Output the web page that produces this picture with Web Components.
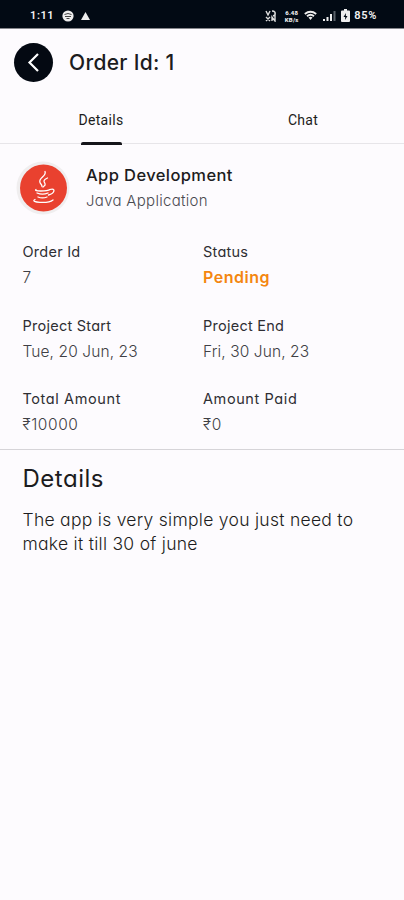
<!DOCTYPE html>
<html lang="en">
<head>
<meta charset="utf-8">
<meta name="viewport" content="width=device-width, initial-scale=1">
<title>Order Id: 1</title>
<style>
  body{
    margin: 0;
    background-color: #fdfbfe;
    font-family: Inter, "Liberation Sans", sans-serif;
    font-feature-settings: "cv11", "calt" 0;
    color: #1c1c20;
  }
</style>
</head>
<body>
<order-page></order-page>

<script>
// attach an open shadow root with the given markup
const render = (host, html) => {
  const template = document.createElement('template');
  template.innerHTML = html;
  host.attachShadow({mode: 'open'}).appendChild(
    template.content.cloneNode(true)
  );
};

class statusBar extends HTMLElement{
  constructor() {
    super();
    render(this, `
      <style>
        :host{
          display: flex;
          align-items: center;
          box-sizing: border-box;
          height: 29px;
          padding: 3px 27px 0 30px;
          background-color: #020a14;
          border-bottom: 1px solid #85868b;
          color: #f2f2f2;
          font: 600 11px/14px Roboto, sans-serif;
        }
        svg{ display: block; fill: #eee; }
        .time{ width: 32px; letter-spacing: .6px; }
        .triangle{ margin-left: 7px; }
        .right{ display: flex; align-items: center; margin-left: auto; }
        .speed{
          font: 800 6px/7px Roboto, sans-serif;
          letter-spacing: .2px;
          text-align: center;
          width: 17px;
          margin: 0 4px 0 6px;
        }
        .bars{ margin-left: 6px; }
        .battery{ margin: 0 4px 0 5px; }
        .percent{ letter-spacing: .7px; }
      </style>
      <span class="time">1:11</span>
      <svg width="12" height="12" viewBox="0 0 12 12">
        <circle cx="6" cy="6" r="5.600"/>
        <path d="M2.500 4.500q3.500-2 7 0M3 6.500h6M4.500 8.500h3" fill="none" stroke="#444"/>
      </svg>
      <svg class="triangle" width="9" height="8" viewBox="0 0 9 8"><path d="M4.500 0 9 8H0z"/></svg>
      <div class="right">
        <svg width="12" height="12" viewBox="0 0 12 12">
          <path d="M1 1l2 4 2-4M1 7l4 4M5 7l-4 4M7 1q4 0 3 4l-2 1M7 11V7l3 4V2" fill="none" stroke="#ddd" stroke-width="1.400"/>
        </svg>
        <div class="speed">6.48<br>KB/s</div>
        <svg width="13" height="11" viewBox="0 0 13 11">
          <path d="M.8 4Q6.500-.5 12.200 4M3 6.300q3.500-3 7 0" fill="none" stroke="#eee" stroke-width="1.900"/>
          <path d="M4.500 7.500q2-1.500 4 0L6.500 10z"/>
        </svg>
        <svg class="bars" width="13" height="11" viewBox="0 0 13 11">
          <path d="M0 9h2v2H0zM3.500 7h2v4h-2zM7 4h2v7H7z"/>
          <path d="M10.500 1h2v10h-2z" fill="#596068"/>
        </svg>
        <svg class="battery" width="9" height="13" viewBox="0 0 9 13">
          <path d="M3 0h3v1.500h2q1 0 1 1V12q0 1-1 1H1q-1 0-1-1V2.500q0-1 1-1h2z"/>
          <path d="M5 4 2.500 8h1.700L4 11l2.500-4H4.800z" fill="#020a14"/>
        </svg>
        <span class="percent">85%</span>
      </div>
    `);
  }
}

class pageHeader extends HTMLElement{
  constructor() {
    super();
    render(this, `
      <style>
        :host{
          display: flex;
          align-items: center;
          gap: 16px;
          height: 67px;
          padding-left: 14px;
        }
        button{
          width: 39px;
          height: 39px;
          padding: 0;
          border: 0;
          border-radius: 50%;
          background-color: #040912;
        }
        svg{ display: block; }
        h1{
          margin: 0;
          padding-top: 1px;
          font-size: 21px;
          line-height: 30px;
          font-weight: 550;
          letter-spacing: .3px;
        }
      </style>
      <button aria-label="Back">
        <svg width="39" height="39" viewBox="0 0 39 39" fill="none" stroke="#fff" stroke-width="2.200">
          <path d="M24 11 15.500 19.500 24 28"/>
        </svg>
      </button>
      <h1><slot></slot></h1>
    `);
  }
}

class tabBar extends HTMLElement{
  constructor() {
    super();
    render(this, `
      <style>
        :host{
          display: flex;
          height: 48px;
          box-sizing: border-box;
          border-bottom: 1px solid #e7e5e9;
        }
      </style>
      <slot></slot>
    `);
  }
}

class tabItem extends HTMLElement{
  constructor() {
    super();
    render(this, `
      <style>
        :host{
          flex: 1;
          display: flex;
          flex-direction: column;
          align-items: center;
          height: 49px;
          font: 450 14px/48px Roboto, sans-serif;
          letter-spacing: .3px;
        }
        span{ height: 46px; }
        :host([active]) i{
          width: 41px;
          height: 3px;
          border-radius: 2px 2px 0 0;
          background-color: #15151a;
        }
      </style>
      <span><slot></slot></span><i></i>
    `);
  }
}

class serviceCard extends HTMLElement{
  constructor() {
    super();
    render(this, `
      <style>
        :host{
          display: flex;
          align-items: center;
          gap: 16px;
          height: 88px;
          padding-left: 16px;
        }
        svg{ display: block; }
        .name{ font-size: 16.500px; line-height: 26px; font-weight: 450; letter-spacing: .4px; }
        .kind{ font-size: 15px; line-height: 26px; font-weight: 350; letter-spacing: .3px; color: #4a4a50; }
      </style>
      <svg width="54" height="54" viewBox="0 0 54 54">
        <circle cx="27" cy="27" r="26.500" fill="#f0eeef"/>
        <circle cx="27.500" cy="27" r="23.500" fill="#e9412f"/>
        <g fill="none" stroke="#fff" stroke-width="1.300" stroke-linecap="round">
          <path d="M29 10.500c2 5-7 6-5 11 .8 2 2 2 2 4"/>
          <path d="M31.500 17c-5 2-3.500 4-2.500 5.500 1 2-1 2.500-2 3.500"/>
          <path d="M20 28.500c-3 2 11 2 14 0M21 32c3 1.300 8 1.300 11 0M22 36c3 1.200 6 1.200 9 0"/>
          <path d="M34 28.500c6-2 5 4-1.500 5.500"/>
          <path d="M19 38.500c-6 3 13 4.500 18 .5"/>
        </g>
      </svg>
      <div>
        <div class="name"><slot></slot></div>
        <div class="kind"><slot name="kind"></slot></div>
      </div>
    `);
  }
}

class orderField extends HTMLElement{
  constructor() {
    super();
    render(this, `
      <style>
        :host{ display: block; white-space: nowrap; }
        .label{
          font-size: 14.500px;
          line-height: 24px;
          font-weight: 400;
          letter-spacing: var(--label-spacing, .25px);
          color: #2e2e33;
        }
        .value{
          font-size: 15.500px;
          line-height: 27px;
          font-weight: 350;
          letter-spacing: var(--value-spacing, .1px);
          color: #3f3f45;
        }
        :host([pending]) .value{ color: #f4860f; font-size: 16px; font-weight: 600; letter-spacing: .5px; }
      </style>
      <div class="label"></div>
      <div class="value"><slot></slot></div>
    `);
    this.shadowRoot.querySelector('.label').textContent =
      this.getAttribute('label');
  }
}

class orderNotes extends HTMLElement{
  constructor() {
    super();
    render(this, `
      <style>
        :host{
          display: block;
          padding: 12px 22.500px;
          border-top: 1px solid #d6d4d8;
        }
        h2{ margin: 0; font-size: 24px; line-height: 34px; font-weight: 400; letter-spacing: .5px; }
        p{
          margin: 12px 0 0;
          font-size: 17.500px;
          line-height: 24px;
          font-weight: 350;
          letter-spacing: .28px;
          white-space: nowrap;
        }
      </style>
      <h2>Details</h2>
      <p><slot></slot></p>
    `);
  }
}

class orderPage extends HTMLElement{
  constructor() {
    super();
    render(this, `
      <style>
        :host{ display: block; height: 900px; overflow: hidden; }
        .fields{
          display: grid;
          grid-template-columns: 180.500px 1fr;
          row-gap: 22.500px;
          padding: 8.300px 0 10.700px 22.500px;
        }
        .amount{ --label-spacing: .6px; --value-spacing: .6px; }
      </style>
      <status-bar></status-bar>
      <page-header>Order Id: 1</page-header>
      <tab-bar>
        <tab-item active>Details</tab-item>
        <tab-item>Chat</tab-item>
      </tab-bar>
      <service-card>App Development<span slot="kind">Java Application</span></service-card>
      <div class="fields">
        <order-field label="Order Id">7</order-field>
        <order-field label="Status" pending>Pending</order-field>
        <order-field label="Project Start">Tue, 20 Jun, 23</order-field>
        <order-field label="Project End">Fri, 30 Jun, 23</order-field>
        <order-field class="amount" label="Total Amount">₹10000</order-field>
        <order-field class="amount" label="Amount Paid">₹0</order-field>
      </div>
      <order-notes>The app is very simple you just need to<br>make it till 30 of june</order-notes>
    `);
  }
}

window.customElements.define('status-bar', statusBar);
window.customElements.define('page-header', pageHeader);
window.customElements.define('tab-bar', tabBar);
window.customElements.define('tab-item', tabItem);
window.customElements.define('service-card', serviceCard);
window.customElements.define('order-field', orderField);
window.customElements.define('order-notes', orderNotes);
window.customElements.define('order-page', orderPage);
</script>
</body>
</html>
